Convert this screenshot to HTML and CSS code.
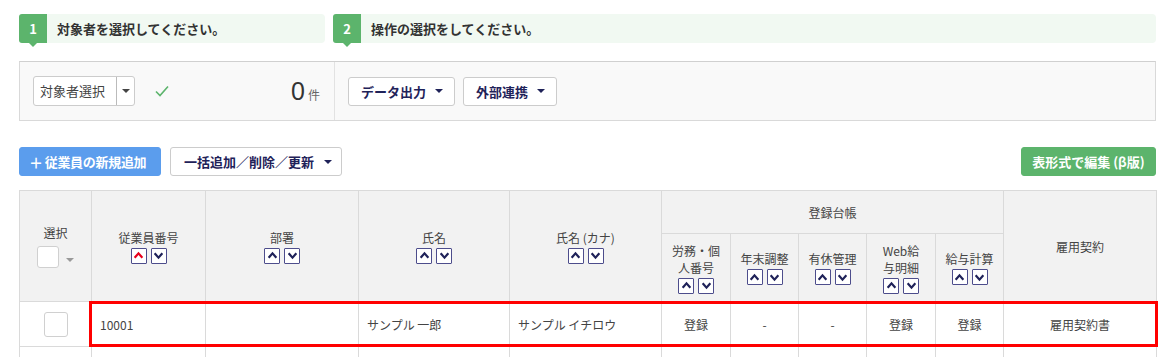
FILE: index.html
```html
<!DOCTYPE html>
<html lang="ja">
<head>
    <meta charset="UTF-8">
    <title>従業員一覧</title>
    <link rel="stylesheet" href="styles.css">
</head>
<body>
<div class="page">

    <!-- ステップ見出し -->
    <div class="steps">
        <div class="step step-1"><span class="badge">1</span><span class="step-text">対象者を選択してください。</span></div>
        <div class="step step-2"><span class="badge">2</span><span class="step-text">操作の選択をしてください。</span></div>
    </div>

    <!-- 操作パネル -->
    <div class="panel">
        <div class="panel-left">
            <div class="select">
                <span class="select-label">対象者選択</span>
                <span class="select-toggle"><i class="caret caret-dark"></i></span>
            </div>
            <svg class="check" width="14" height="12" viewBox="0 0 14 12"><path d="M1 6.5 L5 10.5 L13 1.5" fill="none" stroke="#5cb46c" stroke-width="1.6"/></svg>
            <div class="count"><span class="num">0</span><span class="unit">件</span></div>
        </div>
        <div class="panel-right">
            <button class="btn">データ出力 <i class="caret"></i></button>
            <button class="btn">外部連携 <i class="caret"></i></button>
        </div>
    </div>

    <!-- ツールバー -->
    <div class="toolbar">
        <button class="btn btn-blue"><span class="plus">＋</span> 従業員の新規追加</button>
        <button class="btn btn-bulk">一括追加／削除／更新 <i class="caret"></i></button>
        <button class="btn btn-green">表形式で編集 (β版)</button>
    </div>

    <!-- 一覧 -->
    <div class="table-wrap">
        <table class="list">
            <colgroup>
                <col style="width:72px"><col style="width:114px"><col style="width:153px"><col style="width:151px">
                <col style="width:152px"><col style="width:69px"><col style="width:68px"><col style="width:68px">
                <col style="width:69px"><col style="width:68px"><col style="width:153px">
            </colgroup>
            <thead>
                <tr class="head-top">
                    <th rowspan="2">選択<div class="pick"><span class="box"></span><i class="caret caret-grey"></i></div></th>
                    <th rowspan="2">従業員番号<div class="sort"><span class="sb up active"></span><span class="sb down"></span></div></th>
                    <th rowspan="2">部署<div class="sort"><span class="sb up"></span><span class="sb down"></span></div></th>
                    <th rowspan="2">氏名<div class="sort"><span class="sb up"></span><span class="sb down"></span></div></th>
                    <th rowspan="2">氏名 (カナ)<div class="sort"><span class="sb up"></span><span class="sb down"></span></div></th>
                    <th colspan="5">登録台帳</th>
                    <th rowspan="2">雇用契約</th>
                </tr>
                <tr class="head-sub">
                    <th>労務・個<br>人番号<div class="sort"><span class="sb up"></span><span class="sb down"></span></div></th>
                    <th>年末調整<div class="sort"><span class="sb up"></span><span class="sb down"></span></div></th>
                    <th>有休管理<div class="sort"><span class="sb up"></span><span class="sb down"></span></div></th>
                    <th>Web給<br>与明細<div class="sort"><span class="sb up"></span><span class="sb down"></span></div></th>
                    <th>給与計算<div class="sort"><span class="sb up"></span><span class="sb down"></span></div></th>
                </tr>
            </thead>
            <tbody>
                <tr class="row">
                    <td class="c"><span class="box box-lg"></span></td>
                    <td>10001</td>
                    <td></td>
                    <td>サンプル 一郎</td>
                    <td>サンプル イチロウ</td>
                    <td class="c">登録</td>
                    <td class="c">-</td>
                    <td class="c">-</td>
                    <td class="c">登録</td>
                    <td class="c">登録</td>
                    <td class="c">雇用契約書</td>
                </tr>
                <tr class="row">
                    <td></td><td></td><td></td><td></td><td></td><td></td><td></td><td></td><td></td><td></td><td></td>
                </tr>
            </tbody>
        </table>
        <!-- 強調枠 -->
        <div class="highlight"></div>
    </div>

</div>
</body>
</html>
```

FILE: styles.css
```css
/* 全体 */
body {
    margin: 0;
    background: #fff;
    font-family: "Noto Sans CJK JP", "Noto Sans", sans-serif;
    color: #333;
    overflow: hidden;
}

.page {
    width: 1137px;
    margin-left: 19px;
    padding-top: 14px;
}

/* ステップ */
.steps {
    display: flex;
    gap: 8px;
}

.step {
    display: flex;
    align-items: center;
    height: 29px;
    background: #f1f9f2;
    border-radius: 4px;
    font-size: 13px;
    font-weight: bold;
    color: #333;
}

.step-1 { width: 306px; }
.step-2 { flex: 1; }

.badge {
    position: relative;
    width: 28px;
    height: 29px;
    line-height: 29px;
    background: #5cb46c;
    color: #fff;
    text-align: center;
    font-size: 13px;
    border-radius: 3px 0 0 3px;
    margin-right: 10px;
}

.badge::after {
    content: "";
    position: absolute;
    left: 10px;
    bottom: -4px;
    border-left: 4px solid transparent;
    border-right: 4px solid transparent;
    border-top: 4px solid #5cb46c;
}

/* パネル */
.panel {
    display: flex;
    height: 58px;
    margin-top: 18px;
    background: #f9f9f9;
    border: 1px solid #d9d9d9;
    border-top-color: #d0d0d0;
}

.panel-left {
    display: flex;
    align-items: center;
    width: 315px;
    padding: 0 14px 0 13px;
    box-sizing: border-box;
    border-right: 1px solid #e2e2e2;
}

.select {
    display: flex;
    height: 28px;
    background: #fff;
    border: 1px solid #ccc;
    border-radius: 3px;
    font-size: 13px;
    color: #444;
}

.select-label {
    width: 83px;
    box-sizing: border-box;
    line-height: 28px;
    padding-left: 6px;
    border-right: 1px solid #bbb;
}

.select-toggle {
    display: flex;
    align-items: center;
    justify-content: center;
    width: 17px;
}

.check { margin-left: 20px; }

.count {
    margin-left: auto;
    display: flex;
    align-items: baseline;
}

.count .num {
    font-size: 25px;
    font-family: "Liberation Sans", sans-serif;
    color: #333;
}

.count .unit {
    font-size: 12px;
    color: #666;
    margin-left: 3px;
}

.panel-right {
    display: flex;
    align-items: center;
    gap: 8px;
    padding-left: 13px;
}

/* ボタン */
.btn {
    display: inline-flex;
    align-items: center;
    height: 29px;
    padding: 0 11px 0 12px;
    background: #fff;
    border: 1px solid #ccc;
    border-radius: 3px;
    font-family: inherit;
    font-size: 13px;
    font-weight: bold;
    color: #1f2259;
    white-space: nowrap;
}

.btn .caret { margin-left: 9px; }

.caret {
    display: inline-block;
    width: 0;
    height: 0;
    border-left: 4px solid transparent;
    border-right: 4px solid transparent;
    border-top: 4px solid #1f2259;
}

.caret-dark { border-top-color: #444; }
.caret-grey { border-top-color: #999; }

.toolbar {
    display: flex;
    gap: 9px;
    margin-top: 26px;
}

.btn-blue {
    width: 142px;
    background: #5b9ded;
    border-color: #5b9ded;
    color: #fff;
    padding: 0 9px;
    letter-spacing: -0.3px;
}

.btn-blue .plus {
    font-size: 14px;
    margin-right: 2px;
}

.btn-bulk {
    width: 172px;
    padding: 0 8px 0 13px;
}

.btn-bulk .caret { margin-left: 10px; }

.btn-green {
    margin-left: auto;
    width: 135px;
    padding: 0;
    justify-content: center;
    background: #5cb46c;
    border-color: #5cb46c;
    color: #fff;
}

/* 一覧 */
.table-wrap {
    position: relative;
    margin-top: 14px;
}

.list {
    width: 1137px;
    table-layout: fixed;
    border-collapse: collapse;
    font-size: 12px;
    color: #444;
}

.list th,
.list td {
    border: 1px solid #dadada;
    padding: 0;
}

.list th {
    background: #f2f2f2;
    font-weight: normal;
    text-align: center;
    vertical-align: middle;
    line-height: 17px;
}

.head-top { height: 43px; }
.head-sub { height: 68px; }

.row { height: 45px; }

.row td { padding-left: 8px; }
.row td.c { padding-left: 0; text-align: center; }

.sort {
    display: flex;
    justify-content: center;
    gap: 4px;
    margin-top: 2px;
}

.sb {
    width: 14px;
    height: 14px;
    background: #fff center / 11px 11px no-repeat;
    border: 1px solid #4d4d8c;
    border-radius: 1px;
}

.sb.up {
    background-image: url("data:image/svg+xml,%3Csvg xmlns='http://www.w3.org/2000/svg' viewBox='0 0 10 10'%3E%3Cpath d='M1.5 7 L5 3 L8.5 7' fill='none' stroke='%231f2259' stroke-width='2'/%3E%3C/svg%3E");
}

.sb.up.active {
    background-image: url("data:image/svg+xml,%3Csvg xmlns='http://www.w3.org/2000/svg' viewBox='0 0 10 10'%3E%3Cpath d='M1.5 7 L5 3 L8.5 7' fill='none' stroke='%23e8001c' stroke-width='2'/%3E%3C/svg%3E");
}

.sb.down {
    background-image: url("data:image/svg+xml,%3Csvg xmlns='http://www.w3.org/2000/svg' viewBox='0 0 10 10'%3E%3Cpath d='M1.5 3 L5 7 L8.5 3' fill='none' stroke='%231f2259' stroke-width='2'/%3E%3C/svg%3E");
}

.pick {
    display: flex;
    align-items: center;
    justify-content: center;
    gap: 7px;
    margin-top: 5px;
}

.box {
    display: inline-block;
    width: 20px;
    height: 20px;
    background: #fff;
    border: 1px solid #d0d0d0;
    border-radius: 3px;
    vertical-align: middle;
}

.box-lg {
    width: 22px;
    height: 23px;
}

.pick .caret { margin-top: 6px; }

.highlight {
    position: absolute;
    left: 70px;
    top: 111px;
    width: 1063px;
    height: 40px;
    border: 3px solid #f00;
}
```
